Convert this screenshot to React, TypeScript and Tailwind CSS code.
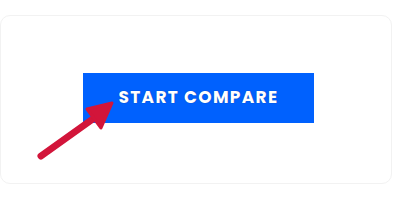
export default function App() {
  return (
    <div className="w-[400px] h-[200px] bg-white pt-[15px] pr-[8px]">
      <div className="relative h-[169px] rounded-[10px] border border-[#f2f2f2] bg-white pl-[82px] pt-[57px]">
        <button className="w-[231px] h-[50px] bg-[#0061fe] text-white font-bold text-[17px] tracking-[1.3px] [font-family:Poppins,Inter,'Noto_Sans',sans-serif] [text-shadow:0_0_1px_rgba(0,0,40,0.5)]">
          START COMPARE
        </button>
        <svg
          className="absolute left-0 top-0"
          width="130"
          height="160"
          viewBox="0 0 130 160"
        >
          <line x1="40" y1="140" x2="96" y2="100" stroke="#d2153a" strokeWidth="7" strokeLinecap="round" />
          <path d="M86 93 L111 87 L100 112 Z" fill="#d2153a" stroke="#d2153a" strokeWidth="3" strokeLinejoin="round" />
        </svg>
      </div>
    </div>
  );
}
